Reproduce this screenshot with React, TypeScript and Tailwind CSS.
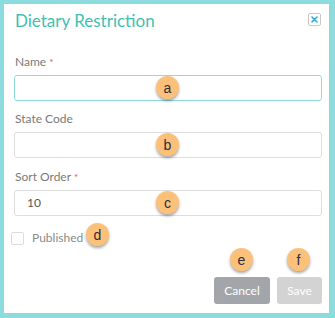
import React from "react";

const Badge = ({ letter, className }: { letter: string; className: string }) => (
  <div
    className={`absolute w-[23px] h-[23px] rounded-full bg-[#fbc17a] shadow-[0_2px_3px_rgba(0,0,0,0.35)] flex items-center justify-center text-[14px] leading-none text-[#2d2d3a] font-['Liberation_Sans',sans-serif] ${className}`}
  >
    {letter}
  </div>
);

const Field = ({
  label,
  required,
  value,
  focused,
  className,
}: {
  label: string;
  required?: boolean;
  value?: string;
  focused?: boolean;
  className?: string;
}) => (
  <div className={className}>
    <div className="text-[12px] leading-[16px] text-[#7a7a7a] ml-[1px]">
      {label}
      {required && <span className="text-[#e8505b] text-[10px] align-top ml-[3px]">*</span>}
    </div>
    <div
      className={`mt-[5px] h-[26px] rounded-[3px] border bg-white flex items-center pl-[12px] text-[12px] text-[#555] ${
        focused ? "border-[#8cdcdf]" : "border-[#dedede]"
      }`}
    >
      {value}
    </div>
  </div>
);

export default function App() {
  return (
    <div className="w-[335px] h-[318px] bg-[#8cdcdf] pl-1 pt-1 pr-[6px] pb-[5px] font-['Lato',sans-serif]">
      <div className="relative h-full bg-white pl-[10px] pr-[7px]">
        {/* header */}
        <div className="flex items-start justify-between pt-[6px]">
          <h2 className="ml-[1px] text-[17px] leading-[22px] text-[#3fc1b3]">Dietary Restriction</h2>
          <button className="mt-[3px] mr-[1px] w-[13px] h-[13px] border border-[#c8c8c8] rounded-[2px] flex items-center justify-center">
            <svg width="7" height="7" viewBox="0 0 7 7">
              <path d="M1 1L6 6M6 1L1 6" stroke="#2fa8df" strokeWidth="1.6" strokeLinecap="round" />
            </svg>
          </button>
        </div>

        <Field label="Name" required focused className="mt-[22px]" />
        <Field label="State Code" className="mt-[10px]" />
        <Field label="Sort Order" required value="10" className="mt-[11px]" />

        <div className="mt-[14px] -ml-[3px] flex items-center">
          <div className="w-[13px] h-[13px] border border-[#dcdcdc] rounded-[2px] bg-white" />
          <span className="ml-[8px] text-[12px] leading-[16px] text-[#8a8a8a]">Published</span>
        </div>

        <div className="mt-[31px] flex justify-end gap-[7px]">
          <button className="w-[56px] h-[27px] rounded-[3px] bg-[#a2a6aa] text-white text-[12px]">Cancel</button>
          <button className="w-[45px] h-[27px] rounded-[3px] bg-[#d3d3d3] text-white text-[12px]">Save</button>
        </div>

        <Badge letter="a" className="left-[152px] top-[72px]" />
        <Badge letter="b" className="left-[152px] top-[129px]" />
        <Badge letter="c" className="left-[152px] top-[187px]" />
        <Badge letter="d" className="left-[82px] top-[219px]" />
        <Badge letter="e" className="left-[226px] top-[244px]" />
        <Badge letter="f" className="left-[283px] top-[244px]" />
      </div>
    </div>
  );
}
